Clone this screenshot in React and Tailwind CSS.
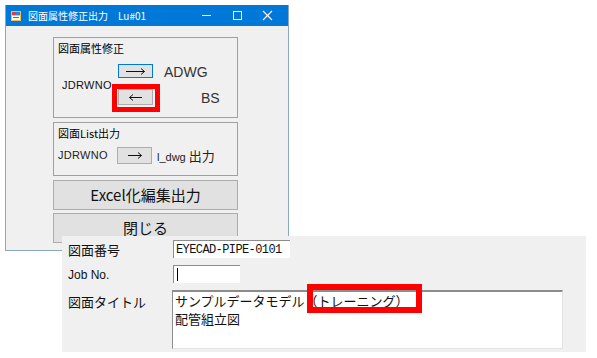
import React from "react";

const jp = { fontFamily: '"Noto Sans CJK JP", "Liberation Sans", sans-serif' };
const lat = { fontFamily: '"Liberation Sans", "Noto Sans CJK JP", sans-serif' };
const mono = { fontFamily: '"Liberation Mono", "Noto Sans CJK JP", monospace' };

const SmallButton = ({ children, focused, className = "" }) => (
  <div
    className={`flex w-[35px] items-center justify-center border bg-[#e1e1e1] ${
      focused ? "border-[#0078d7]" : "border-[#adadad]"
    } ${className}`}
  >
    {children}
  </div>
);

const ArrowRight = ({ w = 19 }) => (
  <svg width={w} height="7" viewBox={`0 0 ${w} 7`}>
    <line x1="0" y1="3.5" x2={w - 0.5} y2="3.5" stroke="#111" strokeWidth="1" />
    <polyline points={`${w - 4},0.5 ${w - 0.5},3.5 ${w - 4},6.5`} fill="none" stroke="#111" strokeWidth="1" />
  </svg>
);

const ArrowLeft = ({ w = 13 }) => (
  <svg width={w} height="7" viewBox={`0 0 ${w} 7`}>
    <line x1="0.5" y1="3.5" x2={w} y2="3.5" stroke="#111" strokeWidth="1" />
    <polyline points="4,0.5 0.5,3.5 4,6.5" fill="none" stroke="#111" strokeWidth="1" />
  </svg>
);

const AppIcon = () => (
  <svg width="10" height="10" viewBox="0 0 10 10">
    <rect x="0" y="0" width="10" height="10" fill="#f2c14e" />
    <rect x="1" y="1" width="4" height="3" fill="#d9422b" />
    <rect x="5" y="1" width="4" height="3" fill="#3f7bd0" />
    <rect x="1" y="5" width="8" height="4" fill="#ffffff" />
    <rect x="2" y="6" width="6" height="1" fill="#6a6a6a" />
  </svg>
);

const WindowControls = () => (
  <svg width="88" height="21" viewBox="0 0 88 21">
    <line x1="2" y1="10.5" x2="11" y2="10.5" stroke="#fff" strokeWidth="1" />
    <rect x="33.5" y="6.5" width="8" height="8" fill="none" stroke="#fff" strokeWidth="1" />
    <line x1="63" y1="6" x2="72" y2="15" stroke="#fff" strokeWidth="1.1" />
    <line x1="72" y1="6" x2="63" y2="15" stroke="#fff" strokeWidth="1.1" />
  </svg>
);

export default function App() {
  return (
    <div className="relative h-[358px] w-[597px] overflow-hidden bg-white">
      {/* dialog window */}
      <div className="absolute left-[5px] top-[5px] flex h-[246px] w-[284px] flex-col border-x border-b border-[#8aa7c4] bg-[#f0f0f0]">
        <div className="flex h-[21px] shrink-0 items-center bg-[#0078d7] text-white">
          <div className="ml-[5px] mr-[7px] flex items-center">
            <AppIcon />
          </div>
          <span className="text-[10px] leading-none" style={jp}>
            図面属性修正出力　Lu#01
          </span>
          <div className="ml-auto flex items-center">
            <WindowControls />
          </div>
        </div>

        <div className="ml-[47px] flex w-[185px] flex-col pt-[11px]">
          {/* group 1 */}
          <div className="flex h-[81px] flex-col border border-[#a0a0a0] px-[4px] pt-[4px]">
            <span className="text-[11px] leading-[12px] text-black" style={jp}>
              図面属性修正
            </span>
            <div className="mt-[10px] flex items-center">
              <span className="ml-[4px] w-[56px] pt-[2px] text-[11px] leading-none tracking-[0.3px] text-[#111]" style={lat}>
                JDRWNO
              </span>
              <div className="flex flex-col gap-[11px]">
                <SmallButton focused className="h-[14px]">
                  <ArrowRight />
                </SmallButton>
                <SmallButton className="h-[16px]">
                  <ArrowLeft />
                </SmallButton>
              </div>
              <div className="flex flex-col">
                <span className="ml-[11px] text-[14px] leading-none text-[#333]" style={lat}>
                  ADWG
                </span>
                <span className="ml-[48px] mt-[12px] text-[14px] leading-none text-[#333]" style={lat}>
                  BS
                </span>
              </div>
            </div>
          </div>

          {/* group 2 */}
          <div className="mt-[4px] flex h-[54px] flex-col border border-[#a0a0a0] px-[4px] pt-[4px]">
            <span className="text-[11px] leading-[12px] text-black" style={jp}>
              図面List出力
            </span>
            <div className="mt-[8px] flex items-center">
              <span className="w-[59px] text-[11px] leading-none tracking-[0.3px] text-[#222]" style={lat}>
                JDRWNO
              </span>
              <SmallButton className="h-[17px]">
                <ArrowRight w={14} />
              </SmallButton>
              <span className="ml-[5px] text-[11px] leading-none text-[#222]" style={lat}>
                l_dwg <span className="text-[13px]" style={jp}>出力</span>
              </span>
            </div>
          </div>

          <div
            className="mt-[4px] flex h-[30px] items-center justify-center border border-[#adadad] bg-[#e1e1e1] text-[15px] font-normal text-[#111]"
            style={jp}
          >
            Excel化編集出力
          </div>
          <div
            className="mt-[3px] flex h-[30px] items-center justify-center border border-[#adadad] bg-[#e1e1e1] text-[15px] font-normal text-[#111]"
            style={jp}
          >
            閉じる
          </div>
        </div>
      </div>

      {/* highlight on ← button */}
      <div className="absolute left-[112px] top-[84px] h-[28px] w-[48px] border-[5px] border-[#ff0000]" />

      {/* properties panel */}
      <div className="absolute left-[62px] top-[236px] h-[116px] w-[524px] bg-[#f0f0f0] pl-[6px] pt-[4px]">
        <div className="grid grid-cols-[105px_1fr] gap-y-[7px] text-[13px] text-[#111]" style={jp}>
          <span className="self-center leading-none">図面番号</span>
          <div
            className="flex h-[18px] w-[117px] items-center border-l border-t border-[#8c8c8c] border-b-[#e3e3e3] border-r-[#e3e3e3] bg-white pl-[2px] text-[12px] leading-none tracking-[-0.6px]"
            style={mono}
          >
            EYECAD-PIPE-0101
          </div>

          <span className="self-center pt-[2px] text-[12px] leading-none" style={lat}>
            Job No.
          </span>
          <div className="flex h-[18px] w-[67px] items-center border-l border-t border-[#8c8c8c] border-b-[#e3e3e3] border-r-[#e3e3e3] bg-white pl-[3px]">
            <div className="h-[13px] w-px bg-black" />
          </div>

          <span className="self-start pt-[5px] leading-none">図面タイトル</span>
          <div className="-ml-px h-[59px] w-[391px] border-t-2 border-l border-[#8c8c8c] border-b border-r border-b-[#e3e3e3] border-r-[#e3e3e3] bg-white pl-[2px] text-[13px] leading-[18px]">
            <div>サンプルデータモデル（トレーニング）</div>
            <div>配管組立図</div>
          </div>
        </div>
      </div>

      {/* highlight on title text */}
      <div className="absolute left-[307px] top-[284px] h-[29px] w-[115px] border-[6px] border-[#ff0000]" />
    </div>
  );
}
